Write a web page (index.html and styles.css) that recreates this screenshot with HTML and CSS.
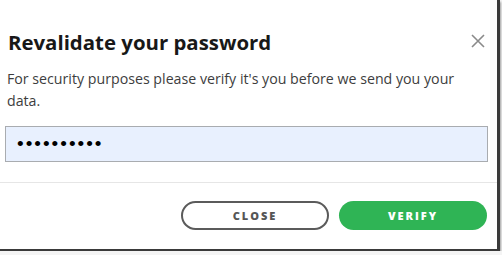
FILE: index.html
```html
<!DOCTYPE html>
<html lang="en">
<head>
    <meta charset="UTF-8">
    <meta name="viewport" content="width=device-width, initial-scale=1.0">
    <title>Revalidate your password</title>
    <link rel="stylesheet" href="styles.css">
</head>
<body>
    <div class="dialog">
        <div class="dialog-body">
            <div class="dialog-header">
                <h1>Revalidate your password</h1>
                <button class="close-x" aria-label="Close">
                    <svg width="14" height="14" viewBox="0 0 14 14">
                        <path d="M1 1 L13 13 M13 1 L1 13" stroke="#8a8a8a" stroke-width="1.6" fill="none"/>
                    </svg>
                </button>
            </div>
            <p>For security purposes please verify it's you before we send you your data.</p>
            <input type="password" class="password" value="0123456789">
        </div>
        <div class="dialog-footer">
            <button class="btn btn-outline">Close</button>
            <button class="btn btn-green">Verify</button>
        </div>
    </div>
</body>
</html>
```

FILE: styles.css
```css
body {
    margin: 0;
    background-color: #f4f4f4;
    font-family: "Open Sans", sans-serif;
}
.dialog {
    width: 497px;
    height: 249px;
    background-color: #fff;
    border-right: 3px solid #3a3a3a;
    border-bottom: 2px solid #3a3a3a;
    box-shadow: 1px 2px 2px rgba(0, 0, 0, 0.35);
    display: flex;
    flex-direction: column;
}
.dialog-body {
    padding: 27px 10px 0 6px;
    border-bottom: 1px solid #e6e6e6;
    height: 155px;
}
.dialog-header {
    display: flex;
    justify-content: space-between;
    align-items: center;
    padding-left: 2px;
}
h1 {
    margin: 0;
    font-size: 20.4px;
    line-height: 30px;
    font-weight: 700;
    color: #181818;
}
.close-x {
    background: none;
    border: none;
    padding: 0;
    margin-right: 2px;
    margin-top: -2px;
    cursor: pointer;
    display: flex;
}
p {
    margin: 11px 0 0 1px;
    max-width: 460px;
    font-size: 14.2px;
    line-height: 22px;
    color: #3d3d3d;
}
.password {
    box-sizing: border-box;
    display: block;
    margin-top: 14px;
    margin-left: -1px;
    width: 483px;
    height: 36px;
    padding: 0 11px;
    background-color: #e8f0fe;
    border: 1px solid #a9acb0;
    font-size: 19px;
    letter-spacing: 2px;
    color: #000;
}
.dialog-footer {
    display: flex;
    justify-content: flex-end;
    gap: 10px;
    padding: 18px 10px 0 0;
}
.btn {
    box-sizing: border-box;
    width: 148px;
    height: 29px;
    border-radius: 15px;
    font-family: "Open Sans", sans-serif;
    font-size: 11px;
    font-weight: 800;
    letter-spacing: 2px;
    text-transform: uppercase;
    cursor: pointer;
}
.btn-outline {
    background-color: #fff;
    border: 2px solid #5b5b5b;
    color: #555;
}
.btn-green {
    background-color: #2fb455;
    border: none;
    color: #fff;
}
```
